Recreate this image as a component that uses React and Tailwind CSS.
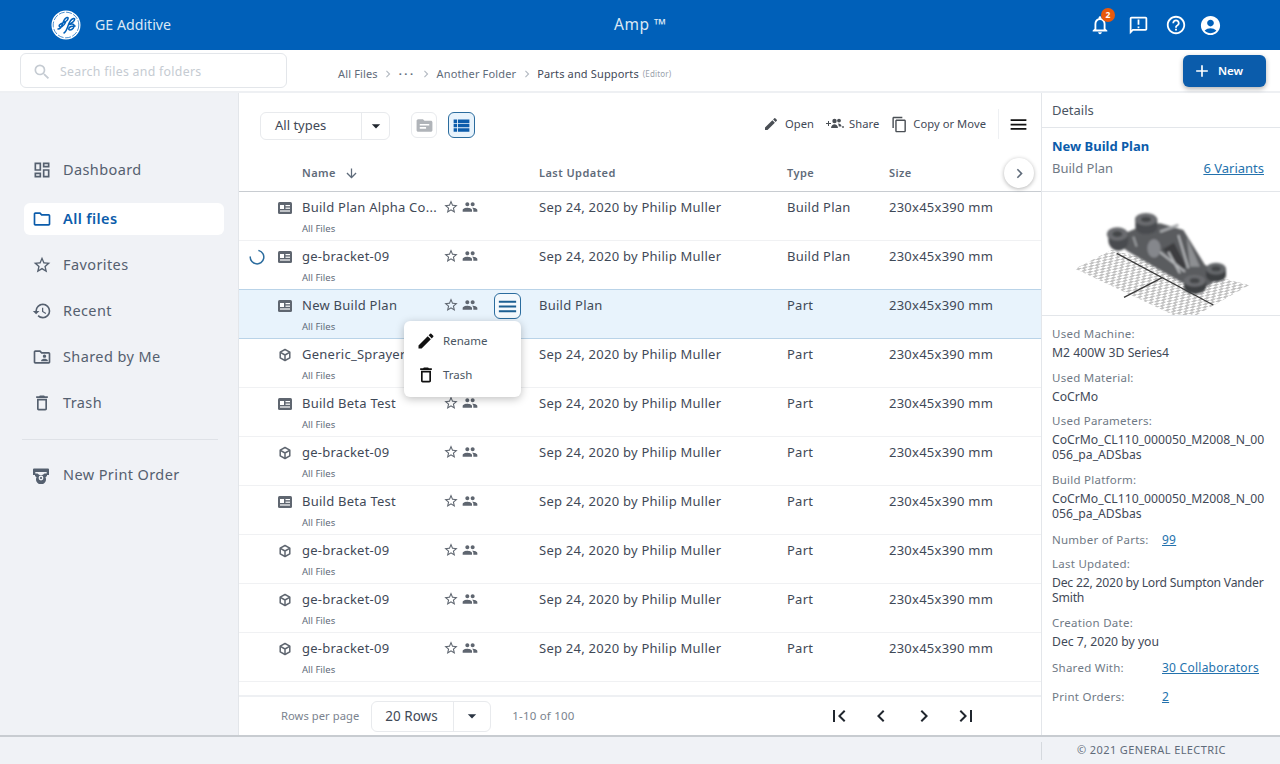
import {
  MdAccountCircle, MdAdd, MdArrowDownward, MdArrowDropDown, MdChevronLeft, MdChevronRight, MdContentCopy,
  MdEdit, MdFirstPage, MdHelpOutline, MdHistory, MdLastPage, MdMenu, MdNotificationsNone,
  MdOutlineAnnouncement, MdOutlineDashboard, MdOutlineDelete, MdOutlineFolder, MdOutlineFolderShared,
  MdPeople, MdSearch, MdStarBorder, MdTopic, MdViewList,
} from 'react-icons/md';

const files = [
  { name: 'Build Plan Alpha Co...', kind: 'plan', updated: 'Sep 24, 2020 by Philip Muller', type: 'Build Plan' },
  { name: 'ge-bracket-09', kind: 'plan', updated: 'Sep 24, 2020 by Philip Muller', type: 'Build Plan', loading: true },
  { name: 'New Build Plan', kind: 'plan', updated: 'Build Plan', type: 'Part', selected: true },
  { name: 'Generic_Sprayer', kind: 'part', updated: 'Sep 24, 2020 by Philip Muller', type: 'Part' },
  { name: 'Build Beta Test', kind: 'plan', updated: 'Sep 24, 2020 by Philip Muller', type: 'Part' },
  { name: 'ge-bracket-09', kind: 'part', updated: 'Sep 24, 2020 by Philip Muller', type: 'Part' },
  { name: 'Build Beta Test', kind: 'plan', updated: 'Sep 24, 2020 by Philip Muller', type: 'Part' },
  { name: 'ge-bracket-09', kind: 'part', updated: 'Sep 24, 2020 by Philip Muller', type: 'Part' },
  { name: 'ge-bracket-09', kind: 'part', updated: 'Sep 24, 2020 by Philip Muller', type: 'Part' },
  { name: 'ge-bracket-09', kind: 'part', updated: 'Sep 24, 2020 by Philip Muller', type: 'Part' },
];

const GeLogo = () => (
  <svg width="30" height="30" viewBox="0 0 30 30">
    <circle cx="15" cy="15" r="14.5" fill="#fff" />
    <circle cx="15" cy="15" r="12.8" fill="none" stroke="#0060b9" strokeWidth="0.7" strokeDasharray="6 1.500" />
    <path d="M7 19c2 0 3.500-2 4.500-5 1-3 2.500-6 4.500-6.500 1.500-.3 1.500 1.500 0 3-2 2-6 2.500-7.500 4.500-1 1.500.5 2.500 2.500 1.500 2-1 3-3 3.500-4" fill="none" stroke="#0060b9" strokeWidth="1.500" strokeLinecap="round" />
    <path d="M13 23c2-1 3-4 4-7 1-3 3-7 5.500-7.500 1.500-.3 1.500 1.500 0 3-1.200 1.200-3 2-4.500 3 2-.8 4.500-.8 5 .5.600 2-1.500 5-4 5-2 0-1.500-2.500 1-3.500 1.500-.6 3-.7 4-.5" fill="none" stroke="#0060b9" strokeWidth="1.500" strokeLinecap="round" />
  </svg>
);

const PlanIcon = () => (
  <svg width="14" height="12" viewBox="0 0 14 12">
    <rect width="14" height="12" rx="1.5" fill="#5f6670" />
    <rect x="2" y="3" width="4" height="4" fill="#fff" />
    <rect x="7.5" y="3" width="4.5" height="1.2" fill="#fff" />
    <rect x="7.5" y="5.6" width="4.5" height="1.2" fill="#fff" />
    <rect x="2" y="8.4" width="10" height="1.2" fill="#fff" />
  </svg>
);

const PartIcon = () => (
  <svg width="14" height="14" viewBox="0 0 14 14" fill="none" stroke="#5f6670" strokeWidth="1.5" strokeLinejoin="round">
    <path d="M7 1.5l4.8 2.7v5.6L7 12.5 2.2 9.800V4.200z" />
    <path d="M2.400 4.300L7 7l4.600-2.700M7 7v5.300" />
  </svg>
);

const ShareIcon = () => (
  <svg width="18" height="12" viewBox="0 0 18 12" fill="#4a4f55">
    <path d="M0 5h2V3h1v2h2v1H3v2H2V6H0z" />
    <circle cx="8.500" cy="3" r="2.200" />
    <circle cx="13" cy="2.600" r="1.900" />
    <path d="M5 10c0-2.500 2-3.800 3.500-3.800S12 7.500 12 10z" />
    <path d="M12 5.500c2 0 3.500 1 3.500 3h-2.700c-.1-1.300-.4-2.200-.8-3z" />
    <circle cx="17" cy="9" r="0.900" />
  </svg>
);

const PrintOrderIcon = () => (
  <svg width="18" height="18" viewBox="0 0 18 18" fill="#55606f">
    <path d="M2 2.500h14a1 1 0 0 1 1 1V9h-2.300V6H3.300v3H1V3.500a1 1 0 0 1 1-1z" />
    <path d="M3 7.500h2.500a4.500 4.500 0 0 0 7 0H15V10l-1.500 1.200A5 5 0 1 1 4.500 11.200L3 10z" />
    <circle cx="9" cy="12" r="2.400" fill="#f0f2f6" />
    <circle cx="9" cy="12" r="1.100" />
  </svg>
);

const Bracket = () => (
  <svg width="238" height="123" viewBox="6 6 714 369">
    <defs>
      <pattern id="plate" width="18" height="18" patternUnits="userSpaceOnUse" patternTransform="rotate(14) skewX(-44)">
        <rect width="9" height="9" fill="#c2c2c2" />
        <rect x="9" y="9" width="9" height="9" fill="#c2c2c2" />
      </pattern>
      <filter id="soft"><feGaussianBlur stdDeviation="2.500" /></filter>
    </defs>
    <polygon points="105,236 215,180 628,285 470,375 400,375" fill="url(#plate)" />
    <path d="M230 190L520 345M252 322L368 262" stroke="#3a3a3a" strokeWidth="4" fill="none" />
    <g filter="url(#soft)">
      <path d="M245 170l20-45 35-15 60-10 70 20 65 105 60 25-55 40-70-10-80-45-85-50z" fill="#5a5c5f" />
      <path d="M205 125v25c0 20 15 32 30 32s30-12 30-32v-25z" fill="#4a4c4f" />
      <ellipse cx="232" cy="132" rx="32" ry="20" fill="#6a6c6f" />
      <ellipse cx="232" cy="132" rx="15" ry="9" fill="#44464a" />
      <path d="M286 85v25c0 15 14 22 32 22s34-8 34-22V85z" fill="#4a4c4f" />
      <ellipse cx="318" cy="88" rx="33" ry="19" fill="#6a6c6f" />
      <ellipse cx="318" cy="88" rx="15" ry="8" fill="#44464a" />
      <path d="M498 235v20c0 13 14 20 30 20s30-8 30-20v-20z" fill="#3e4043" />
      <ellipse cx="528" cy="236" rx="30" ry="18" fill="#65676a" />
      <ellipse cx="528" cy="236" rx="14" ry="8" fill="#44464a" />
      <path d="M432 272v20c0 13 14 20 32 20s34-8 34-20v-20z" fill="#3e4043" />
      <ellipse cx="464" cy="272" rx="33" ry="18" fill="#6a6c6f" />
      <ellipse cx="464" cy="272" rx="15" ry="8" fill="#44464a" />
      <path d="M368 178l62 60 8-10-36-70z" fill="#3c3e41" />
      <path d="M440 140l40 90-30 0z" fill="#8d8f92" />
      <path d="M345 175l90 70M385 185l35 65M415 135l30 100" stroke="#b5b7ba" strokeWidth="6" fill="none" />
      <ellipse cx="342" cy="175" rx="20" ry="28" fill="#85878c" />
      <path d="M360 125l55-20" stroke="#a5a7aa" strokeWidth="8" />
      <path d="M280 140l10 30" stroke="#9a9c9f" strokeWidth="6" />
    </g>
  </svg>
);

function NavItem({ icon, label, active, className }) {
  return (
    <div className={`flex items-center h-[32px] rounded-md ${active ? 'bg-white text-[#0b5cab] font-semibold' : 'text-[#55606f]'} ${className}`}>
      <span className="w-[39px] pl-[8px] flex items-center text-[20px]">{icon}</span>
      <span className="text-[14.5px] tracking-[0.4px]">{label}</span>
    </div>
  );
}

function FileRow({ file }) {
  return (
    <div className={`relative grid grid-cols-[63px_237px_248px_102px_1fr] h-[49px] border-b ${file.selected ? 'bg-[#e8f3fc] border-[#b9d3e8]' : 'border-[#f0f1f3]'} ${file.selected ? 'border-t -mt-px h-[50px]' : ''}`}>
      <div className="flex items-center h-[31px] pl-[10px]">
        <span className="w-[29px]">
          {file.loading && (
            <svg width="16" height="16" viewBox="0 0 16 16" fill="none" stroke="#2b6c9e" strokeWidth="1.500" strokeLinecap="round">
              <path d="M10 1.600a6.800 6.800 0 1 1-8.800 6.400" />
            </svg>
          )}
        </span>
        {file.kind === 'plan' ? <PlanIcon /> : <PartIcon />}
      </div>
      <div className="relative flex items-start">
        <div className="w-[141px]">
          <div className="text-[13px] leading-[31px] tracking-[0.25px] text-[#3f4957] whitespace-nowrap">{file.name}</div>
          <div className="text-[9.5px] leading-[12px] text-[#5f6b7a]">All Files</div>
        </div>
        <div className="flex items-center h-[29px] gap-[3px] text-[#5f6670]">
          <MdStarBorder className="text-[16px]" />
          <MdPeople className="text-[16px]" />
        </div>
        {file.selected && (
          <button className="absolute left-[192px] top-[3px] w-[27px] h-[26px] flex items-center justify-center rounded-md border border-[#2b6c9e] bg-[#f4f9fd] text-[#1c5f92]">
            <MdMenu className="text-[23px]" />
          </button>
        )}
      </div>
      <div className="text-[13px] leading-[31px] tracking-[0.25px] text-[#3f4957] whitespace-nowrap">{file.updated}</div>
      <div className="text-[13px] leading-[31px] tracking-[0.25px] text-[#3f4957]">{file.type}</div>
      <div className="text-[13px] leading-[31px] tracking-[0.25px] text-[#3f4957] whitespace-nowrap">230x45x390 mm</div>
    </div>
  );
}

function Detail({ label, value, className }) {
  return (
    <div className={className}>
      <div className="text-[11.5px] leading-[18px] tracking-[0.25px] text-[#6f7985]">{label}</div>
      <div className="mt-[2px] text-[12.2px] leading-[15px] text-[#3f4957] break-all">{value}</div>
    </div>
  );
}

function DetailLink({ label, value, className }) {
  return (
    <div className={`flex text-[11.5px] leading-[18px] tracking-[0.25px] text-[#6f7985] ${className}`}>
      <span className="w-[110px]">{label}</span>
      <a className="text-[12px] text-[#2472ad] underline">{value}</a>
    </div>
  );
}

export default function App() {
  return (
    <div className="flex flex-col h-screen overflow-hidden bg-white font-['Noto_Sans',sans-serif]">
      <header className="relative flex items-center justify-between h-[50px] shrink-0 bg-[#0060b9] pl-[51px] pr-[58px] text-white">
        <div className="flex items-center gap-[14px]">
          <GeLogo />
          <span className="text-[14.2px] text-[#dbe8f5]">GE Additive</span>
        </div>
        <div className="absolute left-[614px] text-[15.5px] tracking-[0.5px] text-[#dbe8f5]">Amp ™</div>
        <div className="flex items-center">
          <div className="relative">
            <MdNotificationsNone className="text-[22px]" />
            <span className="absolute -top-[6px] right-[-4px] w-[14px] h-[14px] rounded-full bg-[#e8590c] text-[8.5px] leading-[14px] text-center font-bold">2</span>
          </div>
          <MdOutlineAnnouncement className="text-[21px] ml-[17px]" />
          <MdHelpOutline className="text-[22px] ml-[16px]" />
          <MdAccountCircle className="text-[23px] ml-[12px]" />
        </div>
      </header>

      <div className="flex items-center h-[43px] shrink-0 border-b-2 border-[#eef0f3] pl-[20px] pr-[14px]">
        <div className="flex items-center w-[267px] h-[35px] rounded-md border border-[#e3e6ea] pl-[11px] gap-[8px] text-[#c5cbd2]">
          <MdSearch className="text-[20px] mt-[2px]" />
          <span className="text-[12.3px] tracking-[0.3px] mt-[3px]">Search files and folders</span>
        </div>
        <div className="flex items-center ml-[51px] mt-[7px] text-[11px] text-[#5f6b7a] tracking-[0.15px]">
          <span>All Files</span>
          <MdChevronRight className="mx-[3.5px] text-[14px] text-[#b5bbc3]" />
          <span className="font-bold tracking-[2.5px]">···</span>
          <MdChevronRight className="mx-[3.5px] text-[14px] text-[#b5bbc3]" />
          <span>Another Folder</span>
          <MdChevronRight className="mx-[3.5px] text-[14px] text-[#b5bbc3]" />
          <span className="text-[#3f4957]">Parts and Supports</span>
          <span className="ml-[4px] text-[8px] text-[#9aa2ac]">(Editor)</span>
        </div>
        <button className="flex items-center ml-auto w-[83px] h-[32px] rounded-md bg-[#0b5cab] pl-[9px] gap-[6px] text-white shadow-[0_2px_5px_rgba(0,0,0,0.3)]">
          <MdAdd className="text-[20px]" />
          <span className="text-[11.5px] font-semibold">New</span>
        </button>
      </div>

      <div className="flex flex-1 min-h-0 border-b-2 border-[#c8ccd1]">
        <aside className="w-[239px] shrink-0 bg-[#f0f2f6] border-r border-[#e3e6ea] pt-[61px] pl-[24px] pr-[14px]">
          <NavItem icon={<MdOutlineDashboard />} label="Dashboard" className="mb-[17px]" />
          <NavItem icon={<MdOutlineFolder />} label="All files" active className="mb-[14px]" />
          <NavItem icon={<MdStarBorder />} label="Favorites" className="mb-[14px]" />
          <NavItem icon={<MdHistory />} label="Recent" className="mb-[14px]" />
          <NavItem icon={<MdOutlineFolderShared />} label="Shared by Me" className="mb-[14px]" />
          <NavItem icon={<MdOutlineDelete />} label="Trash" />
          <div className="h-px bg-[#dfe2e7] -ml-[2px] mr-[6px] mt-[20px] mb-[19px]" />
          <NavItem icon={<PrintOrderIcon />} label="New Print Order" />
        </aside>

        <main className="relative flex flex-col flex-1 min-w-0">
          <div className="flex items-center h-[66px] shrink-0 pl-[21px] pr-[12px]">
            <div className="flex items-center w-[130px] h-[28px] rounded-md border border-[#e8eaed] mb-[1px]">
              <span className="flex-1 pl-[14px] text-[13px] mt-[1px] text-[#3f4957]">All types</span>
              <span className="flex items-center justify-center w-[28px] h-full border-l border-[#e8eaed] text-[20px] text-[#20262e]"><MdArrowDropDown /></span>
            </div>
            <button className="ml-[21px] mb-[2px] flex items-center justify-center w-[26px] h-[26px] rounded-md border border-[#e8eaed] text-[#b0b4b9] text-[19px]"><MdTopic /></button>
            <button className="ml-[11px] mb-[2px] flex items-center justify-center w-[27px] h-[26px] rounded-md border border-[#2b6c9e] bg-[#e8f3fc] text-[#0b5cab] text-[21px]"><MdViewList /></button>
            <div className="flex items-center ml-auto mb-[4px] text-[11.2px] tracking-[0.05px] text-[#3f4957]">
              <MdEdit className="text-[16px] mr-[6px] text-[#4a4f55]" />
              <span>Open</span>
              <span className="ml-[12px] mr-[5px]"><ShareIcon /></span>
              <span>Share</span>
              <MdContentCopy className="text-[17px] ml-[12px] mr-[5px] text-[#4a4f55]" />
              <span>Copy or Move</span>
              <span className="w-px h-[30px] bg-[#eef0f3] ml-[12px] mr-[9px]" />
              <MdMenu className="text-[21px] text-[#111]" />
            </div>
          </div>

          <div className="grid grid-cols-[63px_237px_248px_102px_1fr] items-center h-[33px] shrink-0 pb-[3px] border-b border-[#c8ccd1] text-[11px] font-semibold tracking-[0.45px] text-[#5f6b7a]">
            <span />
            <span className="flex items-center gap-[8px]">Name <MdArrowDownward className="text-[15px]" /></span>
            <span>Last Updated</span>
            <span>Type</span>
            <span>Size</span>
          </div>
          <button className="absolute left-[765px] top-[65px] flex items-center justify-center w-[30px] h-[30px] rounded-full bg-white shadow-[0_1px_4px_rgba(0,0,0,0.3)] text-[#5f6b7a] text-[19px]"><MdChevronRight /></button>

          <div className="flex-1 min-h-0">
            {files.map((file, i) => <FileRow key={i} file={file} />)}
          </div>

          <div className="absolute left-[165px] top-[228px] w-[117px] h-[76px] rounded-md bg-white py-[3px] shadow-[0_2px_8px_rgba(0,0,0,0.25)] z-10">
            <div className="flex items-center h-[34px] pl-[12px] gap-[7px] text-[11.5px] text-[#4a5562]"><MdEdit className="text-[20px] text-[#111]" />Rename</div>
            <div className="flex items-center h-[34px] pl-[12px] gap-[7px] text-[11.5px] text-[#4a5562]"><MdOutlineDelete className="text-[20px] text-[#111]" />Trash</div>
          </div>

          <div className="flex items-center h-[40px] shrink-0 border-t-2 border-[#eef0f3] pl-[42px]">
            <span className="text-[11.2px] tracking-[0.05px] text-[#7a838e]">Rows per page</span>
            <div className="flex items-center ml-[12px] w-[120px] h-[31px] rounded-md border border-[#e8eaed]">
              <span className="flex-1 pl-[13px] text-[13.5px] text-[#3f4957]">20 Rows</span>
              <span className="flex items-center justify-center w-[37px] h-full border-l border-[#e8eaed] text-[20px] text-[#2a3442]"><MdArrowDropDown /></span>
            </div>
            <span className="ml-[21px] text-[11.5px] tracking-[0.2px] text-[#7a838e]">1-10 of 100</span>
            <div className="flex items-center gap-[18.5px] ml-[252px] text-[24px] text-[#20262e]">
              <MdFirstPage /><MdChevronLeft /><MdChevronRight /><MdLastPage />
            </div>
          </div>
        </main>

        <aside className="flex flex-col w-[239px] shrink-0 border-l border-[#e3e6ea]">
          <div className="flex items-center h-[35px] shrink-0 border-b border-[#e3e6ea] pl-[10px] pt-[2px] text-[13px] text-[#4a5562]">Details</div>
          <div className="h-[64px] shrink-0 border-b border-[#e3e6ea] px-[10px] pt-[9px]">
            <div className="text-[13px] leading-[19px] font-bold text-[#0b5cab]">New Build Plan</div>
            <div className="flex justify-between mt-[3px] pr-[6px] text-[13px] leading-[19px]">
              <span className="text-[#6f7985]">Build Plan</span>
              <a className="text-[#2472ad] underline">6 Variants</a>
            </div>
          </div>
          <div className="h-[124px] shrink-0 border-b border-[#e3e6ea]"><Bracket /></div>
          <div className="flex flex-col pl-[10px] pr-[11px] pt-[9px]">
            <Detail label="Used Machine:" value="M2 400W 3D Series4" />
            <Detail label="Used Material:" value="CoCrMo" className="mt-[9px]" />
            <Detail label="Used Parameters:" value="CoCrMo_CL110_000050_M2008_N_00056_pa_ADSbas" className="mt-[8px]" />
            <Detail label="Build Platform:" value="CoCrMo_CL110_000050_M2008_N_00056_pa_ADSbas" className="mt-[9px]" />
            <DetailLink label="Number of Parts:" value="99" className="mt-[10px]" />
            <Detail label="Last Updated:" value={<span className="break-normal tracking-[-0.2px]">Dec 22, 2020 by Lord Sumpton Vander Smith</span>} className="mt-[6px]" />
            <Detail label="Creation Date:" value="Dec 7, 2020 by you" className="mt-[9px]" />
            <DetailLink label="Shared With:" value="30 Collaborators" className="mt-[10px]" />
            <DetailLink label="Print Orders:" value="2" className="mt-[11px]" />
          </div>
        </aside>
      </div>

      <footer className="flex items-center h-[27px] shrink-0 bg-[#f0f2f6] pl-[1041px]">
        <span className="h-[18px] border-l border-[#d5d9de]" />
        <span className="ml-[35px] text-[11px] tracking-[0.4px] text-[#5f6b7a]">© 2021 GENERAL ELECTRIC</span>
      </footer>
    </div>
  );
}
